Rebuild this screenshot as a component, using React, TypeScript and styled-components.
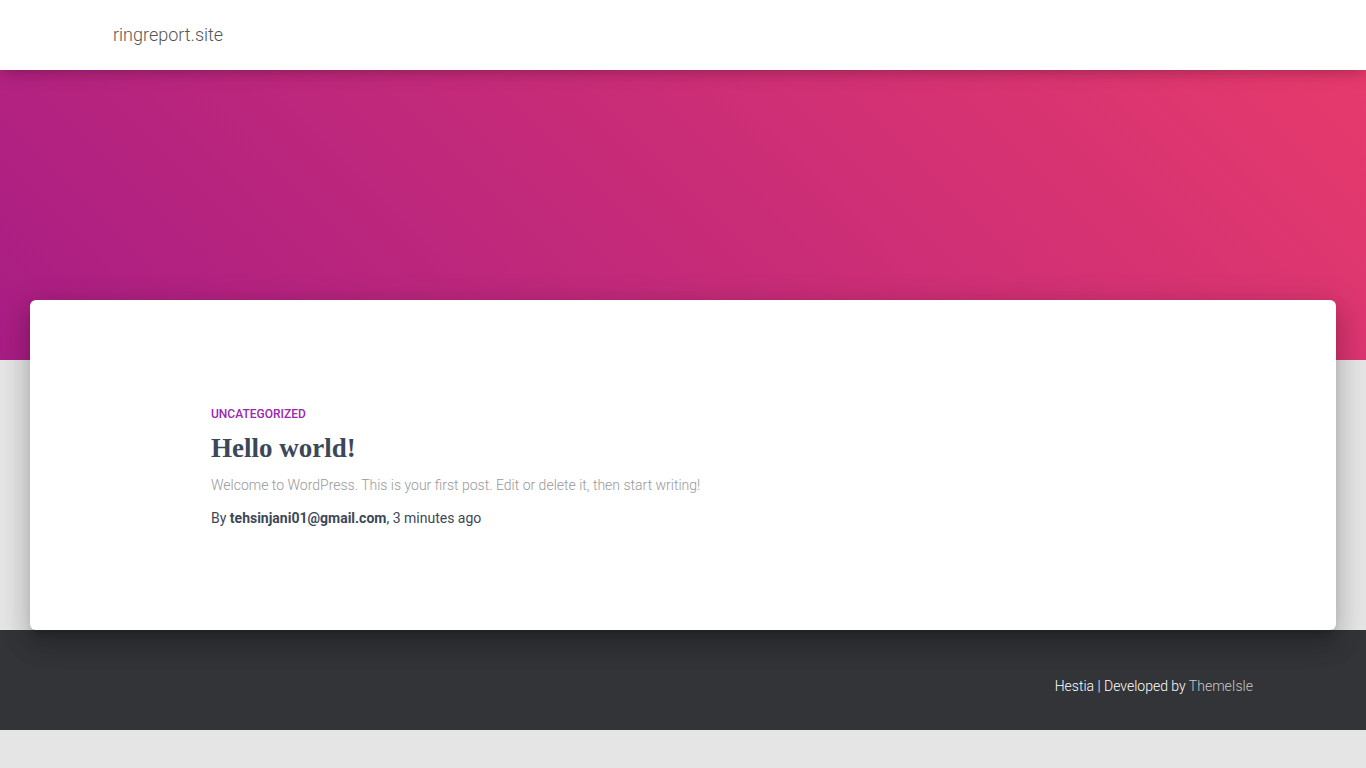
import React from "react";
import styled, { createGlobalStyle } from "styled-components";

const Global = createGlobalStyle`
  html, body { margin: 0; padding: 0; }
  body {
    background: #e5e5e5;
    font-family: Roboto, "Liberation Sans", Arial, sans-serif;
    -webkit-font-smoothing: antialiased;
  }
  * { box-sizing: border-box; }
`;

const Page = styled.div`
  display: flex;
  flex-direction: column;
  min-height: 768px;
`;

const Header = styled.header`
  position: relative;
  z-index: 3;
  height: 70px;
  background: #fff;
  box-shadow: 0 4px 18px 0 rgba(0, 0, 0, 0.12), 0 7px 10px -5px rgba(0, 0, 0, 0.15);
  display: flex;
  align-items: center;
`;

const Container = styled.div`
  width: 1170px;
  margin: 0 auto;
  padding: 0 15px;
`;

const Brand = styled.a`
  font-size: 18px;
  font-weight: 300;
  color: #555555;
  text-decoration: none;
  line-height: 30px;
  display: block;
  margin-top: -1px;
`;

const Hero = styled.div`
  height: 290px;
  background: linear-gradient(45deg, #a81d84 0%, #e63a6c 100%);
  flex-shrink: 0;
`;

const Main = styled.main`
  position: relative;
  z-index: 2;
  margin: -60px 30px 0;
  height: 330px;
  background: #fff;
  border-radius: 6px;
  box-shadow: 0 16px 24px 2px rgba(0, 0, 0, 0.14), 0 6px 30px 5px rgba(0, 0, 0, 0.12),
    0 8px 10px -5px rgba(0, 0, 0, 0.2);
`;

const Article = styled.article`
  width: 1170px;
  margin-left: calc(50% - 585px);
  padding: 106px 15px 0 113px;
`;

const Category = styled.div`
  font-size: 12px;
  font-weight: 500;
  text-transform: uppercase;
  color: #9c27b0;
  line-height: 16px;
`;

const Title = styled.h2`
  margin: 8px 0 0;
  font-family: "Liberation Serif", "DejaVu Serif", serif;
  font-weight: 700;
  font-size: 27px;
  line-height: 36px;
  color: #3c4858;
`;

const Excerpt = styled.p`
  margin: 9px 0 0;
  font-size: 14px;
  font-weight: 300;
  color: #999;
  line-height: 20px;
`;

const Byline = styled.div`
  margin-top: 13px;
  font-size: 14px;
  font-weight: 400;
  color: #3c4858;
  line-height: 20px;
  b { font-weight: 700; }
`;

const Footer = styled.footer`
  position: relative;
  z-index: 1;
  height: 100px;
  background: #323437;
  display: flex;
  align-items: center;
`;

const FooterRow = styled(Container)`
  display: flex;
  justify-content: flex-end;
  padding-top: 11px;
`;

const Credit = styled.div`
  font-size: 14px;
  font-weight: 300;
  color: #fff;
  line-height: 20px;
`;

const CreditLink = styled.a`
  color: #c8c8c8;
  text-decoration: none;
`;

export default function App() {
  return (
    <Page>
      <Global />
      <Header>
        <Container>
          <Brand href="#">ringreport.site</Brand>
        </Container>
      </Header>
      <Hero />
      <Main>
        <Article>
          <Category>Uncategorized</Category>
          <Title>Hello world!</Title>
          <Excerpt>Welcome to WordPress. This is your first post. Edit or delete it, then start writing!</Excerpt>
          <Byline>
            By <b>tehsinjani01@gmail.com</b>, 3 minutes ago
          </Byline>
        </Article>
      </Main>
      <Footer>
        <FooterRow>
          <Credit>
            Hestia | Developed by <CreditLink href="#">ThemeIsle</CreditLink>
          </Credit>
        </FooterRow>
      </Footer>
    </Page>
  );
}
